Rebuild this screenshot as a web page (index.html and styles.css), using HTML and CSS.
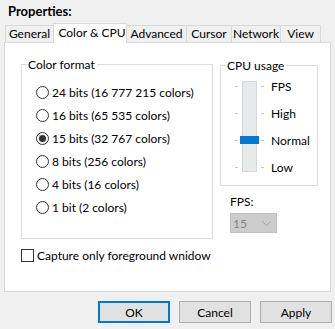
FILE: index.html
```html
<!DOCTYPE html>
<html>
<head>
<meta charset="utf-8">
<link rel="stylesheet" href="styles.css">
</head>
<body>
<div class="title">Properties:</div>
<div class="tabs">
  <div class="tab w-general">General</div>
  <div class="tab active w-color">Color &amp; CPU</div>
  <div class="tab w-adv">Advanced</div>
  <div class="tab w-cursor">Cursor</div>
  <div class="tab w-net">Network</div>
  <div class="tab last w-view">View</div>
</div>
<div class="panel">
  <div class="top-row">
    <div class="group color-group">
      <div class="group-label">Color format</div>
      <div class="radios">
        <div class="opt"><span class="radio"></span>24 bits (16 777 215 colors)</div>
        <div class="opt"><span class="radio"></span>16 bits (65 535 colors)</div>
        <div class="opt"><span class="radio checked"></span>15 bits (32 767 colors)</div>
        <div class="opt"><span class="radio"></span>8 bits (256 colors)</div>
        <div class="opt"><span class="radio"></span>4 bits (16 colors)</div>
        <div class="opt"><span class="radio"></span>1 bit (2 colors)</div>
      </div>
    </div>
    <div class="right-col">
      <div class="group cpu-group">
        <div class="group-label">CPU usage</div>
        <div class="slider">
          <span class="tick r1 c1"></span><span class="tick r2 c1"></span><span class="tick r3 c1"></span><span class="tick r4 c1"></span>
          <div class="track"><div class="thumb"></div></div>
          <span class="tick r1 c3"></span><span class="tick r2 c3"></span><span class="tick r3 c3"></span><span class="tick r4 c3"></span>
          <span class="lbl r1">FPS</span>
          <span class="lbl r2">High</span>
          <span class="lbl r3">Normal</span>
          <span class="lbl r4">Low</span>
        </div>
      </div>
      <div class="fps">
        <div class="fps-label">FPS:</div>
        <div class="combo"><span>15</span><svg width="9" height="5" viewBox="0 0 9 5"><polyline points="0.5,0.5 4.5,4.5 8.5,0.5" fill="none" stroke="#a6a6a6" stroke-width="1"/></svg></div>
      </div>
    </div>
  </div>
  <div class="check-row"><span class="checkbox"></span>Capture only foreground wnidow</div>
</div>
<div class="buttons">
  <div class="btn default">OK</div>
  <div class="btn">Cancel</div>
  <div class="btn">Apply</div>
</div>
</body>
</html>
```
FILE: styles.css
```css
html, body {
  margin: 0;
  padding: 0;
}
body {
  background: #f0f0f0;
  font-family: Lato, "Liberation Sans", sans-serif;
  font-size: 12px;
  color: #000;
  width: 335px;
  height: 329px;
  overflow: hidden;
}
.title {
  font-weight: bold;
  font-size: 13px;
  height: 23px;
  line-height: 23px;
  padding-left: 8px;
}
.tabs {
  display: flex;
  align-items: flex-end;
  height: 20px;
  margin-left: 5px;
  margin-bottom: -1px;
  position: relative;
  z-index: 1;
}
.tab {
  box-sizing: border-box;
  height: 17px;
  margin-bottom: 1px;
  border-top: 1px solid #d9d9d9;
  border-left: 1px solid #d9d9d9;
  background: #f0f0f0;
  text-align: center;
  line-height: 16px;
  white-space: nowrap;
}
.tab.last { border-right: 1px solid #d9d9d9; }
.tab.active {
  height: 20px;
  margin-bottom: 0;
  background: #fff;
  border-right: 1px solid #d9d9d9;
  line-height: 17px;
  padding-left: 4px;
}
.tab.active + .tab { border-left: 0; }
.w-general { width: 48px; }
.w-color { width: 74px; }
.w-adv { width: 59px; }
.w-cursor { width: 45px; }
.w-net { width: 49px; }
.w-view { width: 41px; }

.panel {
  box-sizing: border-box;
  margin-left: 4px;
  width: 327px;
  height: 250px;
  background: #fff;
  border: 1px solid #d9d9d9;
  padding: 21px 0 0 16px;
}
.top-row {
  display: flex;
  gap: 7px;
  align-items: flex-start;
}
.group {
  box-sizing: border-box;
  border: 1px solid #dcdcdc;
}
.group-label {
  display: table;
  margin: -8px 0 0 -9px;
  padding: 0 2px 0 1px;
  background: #fff;
  line-height: 15px;
}
.color-group {
  width: 192px;
  height: 175px;
  padding-left: 14px;
}
.radios {
  margin-top: 9px;
}
.opt {
  display: flex;
  align-items: center;
  height: 23px;
  white-space: nowrap;
}
.radio {
  box-sizing: border-box;
  width: 13px;
  height: 13px;
  border: 1px solid #333;
  border-radius: 50%;
  background: #fff;
  margin-right: 3px;
  display: flex;
  align-items: center;
  justify-content: center;
  flex: none;
}
.radio.checked::after {
  content: "";
  width: 7px;
  height: 7px;
  border-radius: 50%;
  background: #333;
}
.right-col {
  display: flex;
  flex-direction: column;
}
.cpu-group {
  width: 98px;
  height: 121px;
  margin-top: 1px;
  padding-left: 14px;
}
.slider {
  display: grid;
  grid-template-columns: 3px 15px 3px auto;
  grid-template-rows: repeat(4, 27px);
  column-gap: 4px;
  align-items: center;
}
.tick {
  height: 1px;
  background: #c4c4c4;
}
.c1 { grid-column: 1; }
.c3 { grid-column: 3; }
.r1 { grid-row: 1; }
.r2 { grid-row: 2; }
.r3 { grid-row: 3; }
.r4 { grid-row: 4; }
.track {
  grid-column: 2;
  grid-row: 1 / span 4;
  align-self: stretch;
  margin: 8px 0 9px;
  box-sizing: border-box;
  border: 1px solid #d6d6d6;
  background: #e7eaea;
  position: relative;
}
.thumb {
  position: absolute;
  left: -3px;
  top: 54px;
  width: 19px;
  height: 8px;
  background: #0078d7;
}
.lbl {
  grid-column: 4;
  margin-left: 3px;
  line-height: 15px;
}
.fps {
  padding-left: 10px;
}
.fps-label {
  margin-top: 8px;
  line-height: 15px;
}
.combo {
  box-sizing: border-box;
  margin-top: 4px;
  width: 47px;
  height: 20px;
  background: #cccccc;
  border: 1px solid #bfbfbf;
  color: #838383;
  display: flex;
  align-items: center;
  justify-content: space-between;
  padding: 0 5px 0 2px;
}
.check-row {
  display: flex;
  align-items: center;
  margin-top: 9px;
  height: 15px;
  white-space: nowrap;
}
.checkbox {
  box-sizing: border-box;
  width: 13px;
  height: 13px;
  border: 1px solid #333;
  background: #fff;
  margin-right: 3px;
}
.buttons {
  display: flex;
  justify-content: flex-end;
  gap: 9px;
  padding-right: 3px;
  margin-top: 9px;
}
.btn {
  box-sizing: border-box;
  width: 72px;
  height: 22px;
  background: #e1e1e1;
  border: 1px solid #adadad;
  display: flex;
  align-items: center;
  justify-content: center;
}
.btn.default {
  border: 2px solid #0078d7;
}
```
